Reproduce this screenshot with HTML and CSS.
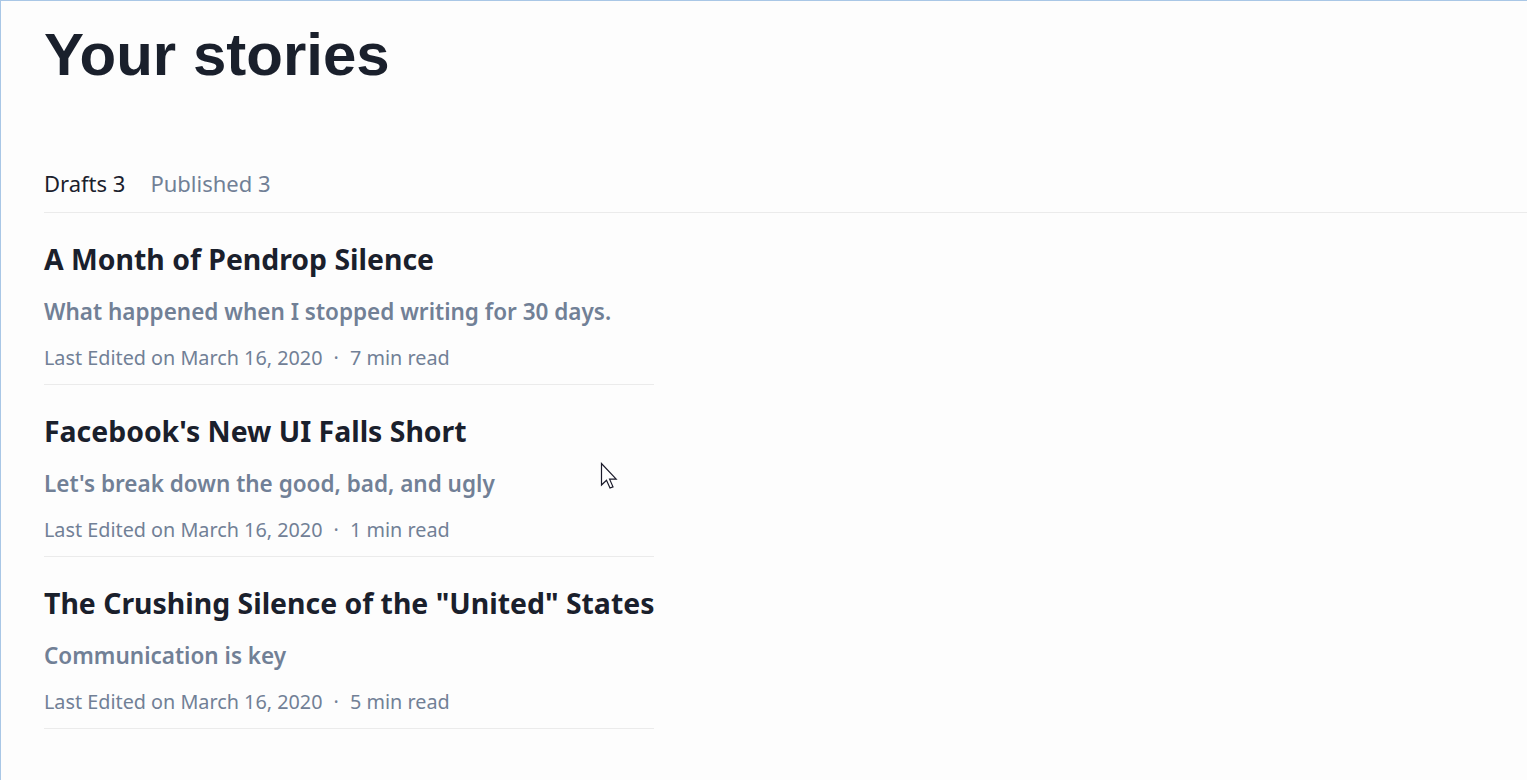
FILE: index.html
```html
<!DOCTYPE html>
<html>
<head>
<meta charset="utf-8">
<link rel="stylesheet" href="styles.css">
</head>
<body>
<div class="page">
  <h1 class="heading">Your stories</h1>
  <nav class="tabs">
    <span class="tab tab-active">Drafts 3</span>
    <span class="tab">Published 3</span>
  </nav>
  <ul class="stories">
    <li class="story">
      <h2 class="story-title">A Month of Pendrop Silence</h2>
      <p class="story-sub">What happened when I stopped writing for 30 days.</p>
      <p class="story-meta">Last Edited on March 16, 2020 <span class="dot">·</span> 7 min read</p>
    </li>
    <li class="story">
      <h2 class="story-title">Facebook's New UI Falls Short</h2>
      <p class="story-sub">Let's break down the good, bad, and ugly</p>
      <p class="story-meta">Last Edited on March 16, 2020 <span class="dot">·</span> 1 min read</p>
    </li>
    <li class="story">
      <h2 class="story-title">The Crushing Silence of the "United" States</h2>
      <p class="story-sub">Communication is key</p>
      <p class="story-meta">Last Edited on March 16, 2020 <span class="dot">·</span> 5 min read</p>
    </li>
  </ul>
  <svg class="cursor" width="20" height="30" viewBox="0 0 20 30">
    <path d="M1.5 1.5 V23 L6.5 18.2 L10 26 L13 24.8 L9.6 17.2 H16.2 Z" fill="#fff" stroke="#1a1a2a" stroke-width="1.2" stroke-linejoin="miter"/>
  </svg>
</div>
</body>
</html>
```
FILE: styles.css
```css
* { box-sizing: border-box; }
html, body { margin: 0; padding: 0; background: #fdfdfd; }
body { width: 1527px; height: 780px; overflow: hidden; }
.page {
  position: relative;
  height: 780px;
  border-top: 1px solid #a9c7e6;
  border-left: 1px solid #a9c7e6;
  padding-left: 43px;
  font-family: "Noto Sans", "Open Sans", sans-serif;
}
.heading {
  margin: 0;
  padding-top: 14px;
  font-family: "Liberation Sans", Arial, sans-serif;
  font-weight: 700;
  font-size: 60px;
  line-height: 80px;
  color: #1a202c;
}
.tabs {
  margin-top: 73px;
  display: flex;
  gap: 25px;
  border-bottom: 1px solid #ebebeb;
  padding-bottom: 14px;
}
.tab {
  font-size: 22px;
  line-height: 30px;
  color: #718096;
}
.tab-active { color: #1a202c; }
.stories {
  list-style: none;
  margin: 0;
  padding: 0;
  width: 610px;
}
.story {
  border-bottom: 1px solid #ebebeb;
  padding-top: 26px;
  padding-bottom: 12px;
}
.story-title {
  margin: 0;
  font-size: 28.4px;
  font-weight: 700;
  line-height: 40px;
  color: #1a202c;
  white-space: nowrap;
}
.story-sub {
  margin: 18px 0 0;
  font-size: 22.5px;
  font-weight: 600;
  line-height: 30px;
  color: #718096;
}
.story-meta {
  margin: 17px 0 0;
  font-size: 19.8px;
  line-height: 28px;
  color: #718096;
}
.dot { margin: 0 6px; }
.cursor {
  position: absolute;
  left: 599px;
  top: 461px;
}
```
